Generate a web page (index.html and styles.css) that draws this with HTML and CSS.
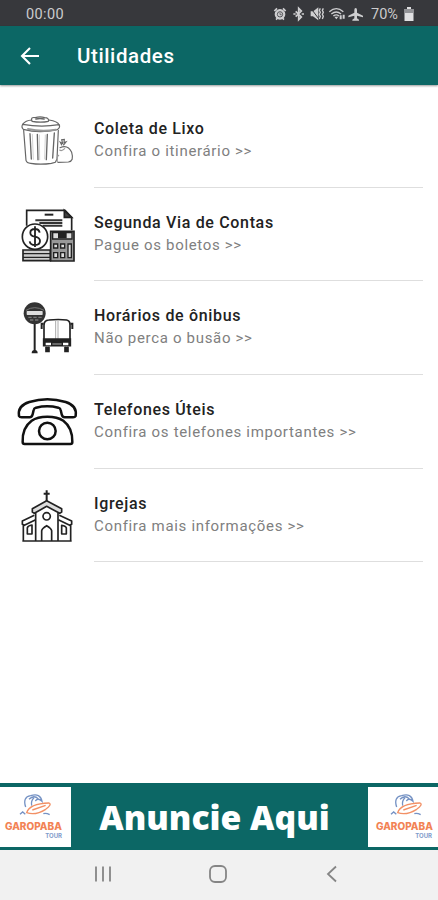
FILE: index.html
```html
<!DOCTYPE html>
<html lang="pt-BR">
<head>
<meta charset="utf-8">
<title>Utilidades</title>
<link rel="stylesheet" href="styles.css">
</head>
<body>
<div class="status">
  <span class="clock">00:00</span>
  <svg class="status-icons" width="92" height="26" viewBox="0 0 276 78">
    <g fill="none" stroke="#cfcfd1" stroke-width="4">
      <circle cx="21" cy="43" r="14" fill="#cfcfd1"/><circle cx="21" cy="43" r="8" stroke="#55565a" stroke-width="3"/><path d="M21 38v6h5" stroke="#37383c" stroke-width="2"/><path d="M4 33l8-8M38 33l-8-8M9 59l5-5M33 59l-5-5" stroke-width="5"/>
      <path d="M68 34l17 17-8 8V25l8 8-17 17M61 42h7M86 42h7" stroke-width="5"/>
      <path d="M115 36h6l13-10v31l-13-10h-6z" fill="#cfcfd1"/><path d="M113 24l27 36" stroke="#37383c" stroke-width="3"/><path d="M142 25l-3 6 3 6-3 6 3 6-3 8M151 25l-3 6 3 6-3 6 3 6-3 8"/>
      <path d="M169 35q21-18 42 0M175 42q15-12 29 0M181 48q9-7 17 0"/><path d="M184 50h12l-6 8z" fill="#cfcfd1" stroke="none"/><path d="M203 58V46M212 44v12" stroke-width="6"/>
      <path d="M248 24q4 0 4 6v8l18 9v5l-18-5v8l6 4v3h-20v-3l6-4v-8l-18 5v-5l18-9v-8q0-6 4-6z" fill="#cfcfd1" stroke="none"/>
    </g>
  </svg>
  <span class="percent">70%</span>
  <svg class="battery" width="10" height="14" viewBox="0 0 10 14"><path d="M3 0h4v2h2.500v12H.5V2H3z" fill="#e0e0e2"/><path d="M.5 2h9v4h-9z" fill="#929397"/></svg>
</div>
<header class="appbar">
  <svg class="back" width="20" height="20" viewBox="0 0 20 20"><path d="M19 10H2M10 2L2 10l8 8" fill="none" stroke="#fff" stroke-width="2.1"/></svg>
  <h1>Utilidades</h1>
</header>
<main class="list">
  <a class="row">
    <svg class="icon" viewBox="0 -33 240 279">
      <g fill="none" stroke="#666" stroke-width="3.500" stroke-linecap="round">
        <path d="M38 58q-5 9 2 15 50 14 103 0 9-6 4-14Q93 68 38 58z"/><path d="M38 58q8-12 28-13M147 59q-4-10-30-14M66 49q-6-14 10-11 14-5 28 0 14 0 11 11-22 5-49 0z"/><path d="M78 42q12-3 24 0" stroke-width="5"/>
        <path d="M41 76l7 90q2 8 14 9 30 5 62 0l12-3 5-10 4-86"/><path d="M54 72q40 9 84 2" stroke="#999" stroke-width="6"/>
        <path d="M60 86l4 76M82 88l2 76M112 88l-3 76M133 84l-5 75" stroke-width="4"/><path d="M67 88l3 75M88 90l1 74M106 90l-2 72" stroke="#bbb" stroke-width="2"/>
        <path d="M150 128q24-10 35 14 8 27-10 29l-31 1M155 120l-4-8 7 4-3-12 8-1-1 10 6-2-7 9"/><path d="M164 131q-9 9-15 4M146 151q-6 4-4 20" stroke="#999"/>
      </g>
    </svg>
    <span class="text"><b>Coleta de Lixo</b><small>Confira o itinerário &gt;&gt;</small></span>
  </a>
  <a class="row">
    <svg class="icon" viewBox="-10 -37 240 279">
      <g fill="none" stroke="#222" stroke-width="5">
        <path d="M40 76V30h115l20 21v39"/><path d="M153 30v21h22z" fill="#444"/><path d="M94 43h26" stroke-width="6"/><path d="M66 60h81M78 68h69M88 76h59" stroke-width="6" stroke="#333"/>
        <path d="M29 149h82v32H29z" fill="#ccc"/><path d="M29 160h86M29 171h86" stroke-width="4"/>
        <circle cx="65" cy="109" r="38" fill="#fff"/><path d="M79 97q-2-11-14-11-14 0-14 11 0 10 14 12 15 3 15 13 0 12-15 12-14 0-16-11M65 78v62" stroke-width="5.500"/>
        <path d="M112 93h70v89h-70z" fill="#999"/><path d="M118 97h58v19h-58z" fill="#ddd" stroke-width="4"/><path d="M134 98h26v16h-26z" fill="#222" stroke="none"/>
        <path d="M121 131h12v12h-12zM142 131h12v12h-12zM121 157h12v15h-12zM142 157h12v15h-12zM164 131h10v41h-10z" fill="#ddd" stroke-width="4"/>
      </g>
    </svg>
    <span class="text"><b>Segunda Via de Contas</b><small>Pague os boletos &gt;&gt;</small></span>
  </a>
  <a class="row">
    <svg class="icon" viewBox="0 -42 240 279">
      <g transform="translate(12 -8)">
        <path d="M62 84v92" stroke="#222" stroke-width="6"/><path d="M53 183q0-10 9-10t9 10z" fill="#222"/>
        <circle cx="62" cy="63" r="33" fill="#333"/><path d="M36 54q26-16 54 0" fill="none" stroke="#777" stroke-width="3"/><rect x="38" y="56" width="48" height="12" rx="2" fill="#ddd"/><path d="M43 75h40M48 83h30" stroke="#777" stroke-width="4" stroke-dasharray="10 5"/>
      </g>
      <g transform="translate(5 -2)" fill="none" stroke="#222" stroke-width="5"><path d="M97 143V93q0-15 14-16 30-3 54 0 10 2 10 15v50" fill="#fff"/><path d="M132 78v56M139 78v56" stroke="#aaa" stroke-width="3"/><path d="M96 134h80v20H96z" fill="#222"/><path d="M102 149h16M154 149h16" stroke="#fff" stroke-width="7"/><path d="M122 149h28" stroke="#777"/><path d="M103 157v14h9v-14M160 157v14h9v-14" fill="#222"/><path d="M96 88h-6v16M176 88h6v16" stroke-width="6"/></g>
    </svg>
    <span class="text"><b>Horários de ônibus</b><small>Não perca o busão &gt;&gt;</small></span>
  </a>
  <a class="row">
    <svg class="icon" viewBox="0 -46 240 279">
      <g fill="none" stroke="#111" stroke-width="7.500" stroke-linejoin="round">
        <path d="M27 77q-5-31 31-42 54-17 109 0 35 11 30 42-2 4-8 4h-25q-7 0-9-9l-3-13q-1-5-7-7-33-8-67 0-6 2-7 7l-3 13q-2 9-9 9H35q-6 0-8-4z"/>
        <path d="M38 155q-2-43 27-64 17-12 47-12t48 12q28 21 27 64 0 6-6 6H44q-6 0-6-6z"/><circle cx="112" cy="122" r="25"/>
      </g>
    </svg>
    <span class="text"><b>Telefones Úteis</b><small>Confira os telefones importantes &gt;&gt;</small></span>
  </a>
  <a class="row">
    <svg class="icon" viewBox="0 -44 240 279">
      <g fill="none" stroke="#222" stroke-width="5" stroke-linejoin="round">
        <path d="M110 20v34M101 30h18" stroke-width="6"/><path d="M110 51L67 75v10l6 4 37-21 39 21 6-4V75z" fill="#ddd"/><path d="M77 88v84M144 88v84"/>
        <path d="M73 95l-36 17v10l6 3 34-17M148 95l37 17v10l-6 3-34-17M40 123v49M182 123v49M37 172h148"/>
        <circle cx="110" cy="98" r="11"/><path d="M95 172v-31q2-8 15-15 13 7 15 15v31"/>
        <path d="M52 151v-19q2-6 14-8v27zM155 151v-26q13 2 14 8v18z"/>
      </g>
    </svg>
    <span class="text"><b>Igrejas</b><small>Confira mais informações &gt;&gt;</small></span>
  </a>
</main>
<aside class="ad">
  <div class="logo">
    <svg width="60" height="29" viewBox="0 0 180 87"><g fill="none" stroke="#7592c4" stroke-width="4"><path d="M62 48q-10-30 15-34 29-9 34 17-12-12-20-1M72 25q15-15 28-1M80 44q-3-15 7-24M45 70l8-7 8 7M115 68q8-3 19 3"/><path d="M65 65q8-27 67-29 10 4-10 19-30 19-57 10zM82 57l40-14" fill="#fff" stroke="#f29065"/></g></svg>
    <b>GAROPABA</b><i>TOUR</i>
  </div>
  <strong>Anuncie Aqui</strong>
  <div class="logo right">
    <svg width="60" height="29" viewBox="0 0 180 87"><g fill="none" stroke="#7592c4" stroke-width="4"><path d="M62 48q-10-30 15-34 29-9 34 17-12-12-20-1M72 25q15-15 28-1M80 44q-3-15 7-24M45 70l8-7 8 7M115 68q8-3 19 3"/><path d="M65 65q8-27 67-29 10 4-10 19-30 19-57 10zM82 57l40-14" fill="#fff" stroke="#f29065"/></g></svg>
    <b>GAROPABA</b><i>TOUR</i>
  </div>
</aside>
<nav class="nav">
  <svg width="18" height="18" viewBox="0 0 18 18"><path d="M2 1.500v15M9 1.500v15M16 1.500v15"/></svg>
  <svg width="18" height="18" viewBox="0 0 18 18"><rect x="1" y="1" width="16" height="16" rx="5"/></svg>
  <svg width="18" height="18" viewBox="0 0 18 18"><path d="M13 1.500L5 9l8 7.500"/></svg>
</nav>
</body>
</html>
```
FILE: styles.css
```css
* { box-sizing: border-box; }
body {
  margin: 0;
  height: 900px;
  display: flex;
  flex-direction: column;
  overflow: hidden;
  background: #fff;
  font-family: Roboto, sans-serif;
}
.status {
  height: 26px;
  flex: none;
  display: flex;
  align-items: center;
  padding: 2px 24px 0 26px;
  background: #37383c;
  color: #cbcbcd;
  font-size: 14.500px;
}
.clock { letter-spacing: 0.4px; }
.status-icons { margin: -2px 0 0 auto; }
.percent { width: 30px; margin-left: 6px; }
.battery { margin-left: 3px; }
.appbar {
  height: 59px;
  flex: none;
  display: flex;
  align-items: center;
  padding-left: 20px;
  background: #0c6765;
  color: #fff;
  box-shadow: 0 1px 2px #0006;
}
.appbar h1 {
  margin: 1px 0 0 37px;
  font-size: 20.500px;
  font-weight: 500;
  letter-spacing: 0.6px;
}
.list { flex: 1; padding-top: 9px; }
.row {
  height: 93.650px;
  display: flex;
  padding: 0 15px 0 10px;
}
.icon { width: 80px; height: 93px; flex: none; }
.text {
  flex: 1;
  margin-left: 4px;
  padding-top: 24px;
  display: flex;
  flex-direction: column;
  border-bottom: 1px solid #dedede;
}
.text b {
  color: #222;
  font-size: 16px;
  font-weight: 500;
  line-height: 22px;
  letter-spacing: 0.66px;
}
.text small {
  color: #808080;
  font-size: 15px;
  line-height: 23px;
  letter-spacing: 0.68px;
}
.ad {
  height: 67px;
  flex: none;
  display: flex;
  align-items: center;
  justify-content: space-between;
  background: #0c6765;
}
.ad strong {
  color: #fff;
  font: 800 33.700px/60px "Open Sans", sans-serif;
  padding: 1px 10px 0 0;
}
.logo {
  width: 71px;
  height: 60px;
  padding: 4px 0 0 5px;
  display: flex;
  flex-direction: column;
  background: #fff;
}
.logo b {
  color: #f28355;
  font: 800 10px/12px Inter, sans-serif;
}
.logo i {
  color: #7f9bcb;
  font: 700 6px/8px Inter, sans-serif;
  text-align: right;
  padding-right: 9px;
}
.right { width: 70px; padding-left: 8px; }
.right i { padding-right: 6px; }
.nav {
  height: 50px;
  flex: none;
  display: flex;
  justify-content: space-between;
  padding: 15px 97px 0 94px;
  background: #f1f1f1;
}
.nav svg { fill: none; stroke: #858585; stroke-width: 1.8; }
```
